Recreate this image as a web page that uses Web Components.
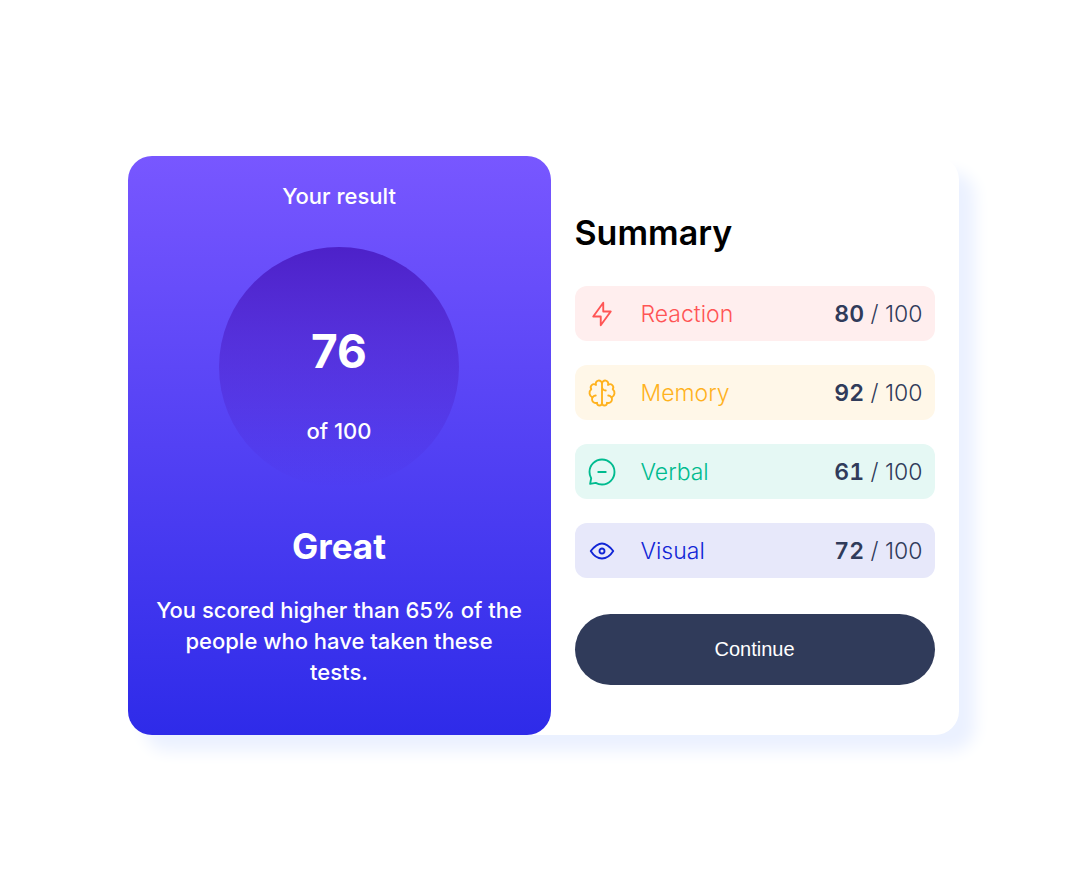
<!DOCTYPE html>
<html lang="en">
<head>
<meta charset="utf-8">
<meta name="viewport" content="width=device-width, initial-scale=1">
<title>Results summary</title>
<style>
  body {
    margin: 0;
    min-height: 100vh;
    display: grid;
    place-items: center;
    background: #fff;
    font-family: Inter, "Liberation Sans", sans-serif;
    font-size: 22px;
    line-height: 31px;
  }
</style>
</head>
<body>
<results-card>
  <result-panel slot="result" score="76" total="100" verdict="Great">You scored higher than 65% of the people who have taken these tests.</result-panel>
  <summary-panel slot="summary">
    <score-row kind="reaction" score="80">Reaction</score-row>
    <score-row kind="memory" score="92">Memory</score-row>
    <score-row kind="verbal" score="61">Verbal</score-row>
    <score-row kind="visual" score="72">Visual</score-row>
  </summary-panel>
</results-card>
<script>
class ResultsCard extends HTMLElement {
  connectedCallback() {
    this.attachShadow({ mode: 'open' }).innerHTML = `
      <style>
        :host { display: block; box-sizing: border-box; width: 100%; max-width: 831px; }
        main {
          display: flex; border-radius: 24px; background: #fff;
          box-shadow: 16px 16px 16px #ebf1ff;
        }
        ::slotted([slot="result"]) { flex: 1 1 0; }
        ::slotted([slot="summary"]) { flex: 0 1 408px; }
        @media (max-width: 700px) {
          main { flex-direction: column; }
          ::slotted([slot="result"]), ::slotted([slot="summary"]) { flex: none; }
        }
      </style>
      <main><slot name="result"></slot><slot name="summary"></slot></main>`;
  }
}
class ResultPanel extends HTMLElement {
  connectedCallback() {
    this.attachShadow({ mode: 'open' }).innerHTML = `
      <style>
        :host {
          display: flex; flex-direction: column; align-items: center; box-sizing: border-box;
          padding: 25px 28px 47px; border-radius: 24px; color: #fff; text-align: center;
          font-weight: 500; background: linear-gradient(#7857ff, #2e2be9);
        }
        p, h1, h2 { margin: 0; }
        h1 { font: inherit; }
        .circle {
          width: 240px; height: 240px; margin: 35px 0 36px; border-radius: 50%;
          display: flex; flex-direction: column; align-items: center; justify-content: center;
          gap: 34px; box-sizing: border-box; padding-top: 34px;
          background: linear-gradient(#4d21c9, #2521c900);
        }
        .circle strong { font-size: 46px; line-height: 62px; font-weight: 700; }
        h2 { font-size: 35px; line-height: 47px; font-weight: 700; margin-bottom: 25px; }
      </style>
      <h1>Your result</h1>
      <div class="circle"><strong>${this.getAttribute('score')}</strong><span>of ${this.getAttribute('total')}</span></div>
      <h2>${this.getAttribute('verdict')}</h2>
      <p><slot></slot></p>`;
  }
}
class SummaryPanel extends HTMLElement {
  connectedCallback() {
    this.attachShadow({ mode: 'open' }).innerHTML = `
      <style>
        :host {
          display: flex; flex-direction: column; justify-content: center;
          box-sizing: border-box; padding: 27px 24px 24px;
        }
        h2 { margin: 0 0 30px; font-size: 34px; line-height: 47px; font-weight: 600; color: #000; }
        .rows { display: grid; gap: 24px; }
        button {
          margin-top: 36px; padding: 20px; border: 0; border-radius: 36px;
          background: #303b5a; color: #fff; cursor: pointer;
          font: 20px/31px "Liberation Sans", Arial, sans-serif;
        }
      </style>
      <h2>Summary</h2>
      <div class="rows"><slot></slot></div>
      <button type="button">Continue</button>`;
  }
}
const KINDS = {
  reaction: ['#ff5555', '#ffeeee', '<path d="M10.833 8.333V2.5l-6.666 9.167h5V17.5l6.666-9.167h-5Z"/>'],
  memory: ['#ffb21e', '#fff7e8', `<path d="M5.833 11.667a2.5 2.5 0 1 0 .834 4.858"/>
    <path d="M3.553 13.004a3.333 3.333 0 0 1-.728-5.53m.025-.067a2.083 2.083 0 0 1 2.983-2.824m.199.054A2.083 2.083 0 1 1 10 3.75v12.917a1.667 1.667 0 0 1-3.333 0M10 5.833a2.5 2.5 0 0 0 2.5 2.5m1.667 3.334a2.5 2.5 0 1 1-.834 4.858"/>
    <path d="M16.447 13.004a3.334 3.334 0 0 0 .728-5.53m-.025-.067a2.083 2.083 0 0 0-2.983-2.824M10 3.75a2.085 2.085 0 0 1 2.538-2.033 2.084 2.084 0 0 1 1.43 2.92m-.635 12.03a1.667 1.667 0 0 1-3.333 0"/>`],
  verbal: ['#00bb8f', '#e5f8f4', '<path d="M10 18.333A8.333 8.333 0 1 0 1.667 10c0 1.518.406 2.942 1.115 4.167l-.699 3.75 3.75-.699A8.295 8.295 0 0 0 10 18.333ZM7.5 10h5"/>'],
  visual: ['#1125d6', '#e7e8fa', '<path d="M10 11.667a1.667 1.667 0 1 0 0-3.334 1.667 1.667 0 0 0 0 3.334Z"/><path d="M17.5 10c-1.574 2.492-4.402 5-7.5 5s-5.926-2.508-7.5-5C4.416 7.632 6.66 5 10 5s5.584 2.632 7.5 5Z"/>']
};
class ScoreRow extends HTMLElement {
  connectedCallback() {
    const [ink, tint, icon] = KINDS[this.getAttribute('kind')];
    this.attachShadow({ mode: 'open' }).innerHTML = `
      <style>
        :host {
          display: flex; align-items: center; padding: 13px 12px 11px; border-radius: 12px;
          background: ${tint}; color: ${ink}; font-size: 23px; font-weight: 300;
        }
        svg {
          width: 30px; height: 30px; margin-right: 24px; fill: none; stroke: ${ink};
          stroke-width: 1.25; stroke-linecap: round; stroke-linejoin: round;
        }
        .score { margin-left: auto; color: #303b5a; }
        b { font-weight: 600; font-variant-numeric: tabular-nums; }
      </style>
      <svg viewBox="0 0 20 20" aria-hidden="true">${icon}</svg>
      <span><slot></slot></span>
      <span class="score"><b>${this.getAttribute('score')}</b> / 100</span>`;
  }
}
customElements.define('results-card', ResultsCard);
customElements.define('result-panel', ResultPanel);
customElements.define('summary-panel', SummaryPanel);
customElements.define('score-row', ScoreRow);
</script>
</body>
</html>
